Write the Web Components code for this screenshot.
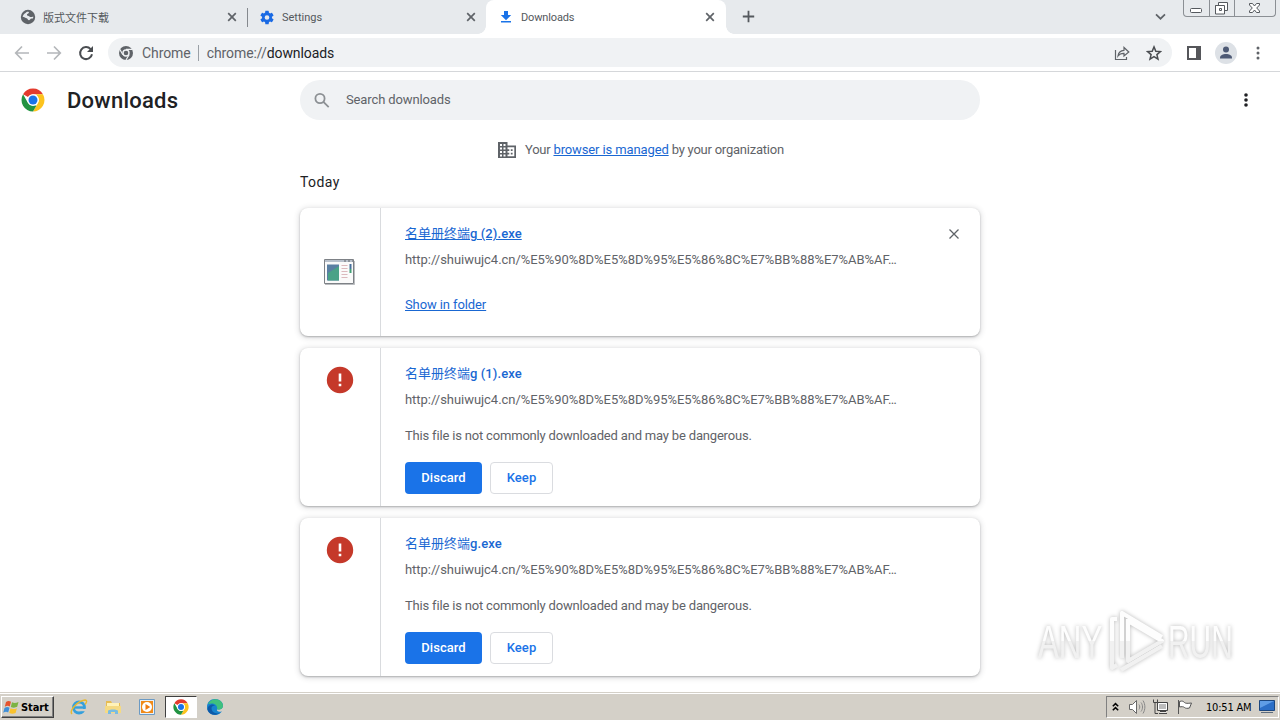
<!DOCTYPE html>
<html lang="en">
<head>
<meta charset="utf-8">
<title>Downloads</title>
<style>
    body { margin: 0; width: 1280px; height: 720px; overflow: hidden; background: #fff; }
</style>
</head>
<body>
<browser-window>
    <tab-strip slot="tabs">
        <browser-tab icon="globe" style="width: 247px">版式文件下载</browser-tab>
        <browser-tab icon="gear" style="width: 238px" divided>Settings</browser-tab>
        <browser-tab icon="download" style="width: 240px" active>Downloads</browser-tab>
    </tab-strip>
    <address-bar slot="toolbar"></address-bar>
    <downloads-header></downloads-header>
    <downloads-list>
        <download-item name="名单册终端g (2).exe" kept></download-item>
        <download-item name="名单册终端g (1).exe"></download-item>
        <download-item name="名单册终端g.exe"></download-item>
    </downloads-list>
    <play-watermark></play-watermark>
    <task-bar slot="taskbar"></task-bar>
</browser-window>

<script>
const ICONS = {
    globe: '<svg width="16" height="16" viewBox="0 0 16 16"><circle cx="8" cy="8" r="7.2" fill="#5f6368"/><path d="M2.6 7.8C3.3 5 5.3 4.3 6.600 3c1.400-.6 2.600-.2 2.300.8-.3.9-1.800.9-2 2 .1 1.200 1.600 1 2.500 1.600.9.7 1.900.9 3.800.1.3 2-.6 2.300-1.900 2.100-.9 0-1 1.500-2.200 1.700-1.300.1-1.200-1.500-2.400-2C5.500 9 4.500 8 2.600 7.800z" fill="#e7eaed"/></svg>',
    gear: '<svg width="17" height="17" viewBox="0 0 24 24"><path fill="#1a6ae4" d="M19.400 13a7.500 7.500 0 0 0 0-2l2.200-1.700c.2-.1.2-.4.1-.6l-2-3.500c-.1-.2-.4-.3-.6-.2l-2.500 1a7.400 7.400 0 0 0-1.700-1l-.4-2.600a.5.5 0 0 0-.5-.4h-4c-.3 0-.5.2-.5.4L9.100 5a7.400 7.400 0 0 0-1.700 1l-2.500-1c-.2-.1-.5 0-.6.2l-2 3.500c-.1.2-.1.5.1.6L4.600 11a7.500 7.500 0 0 0 0 2l-2.200 1.700c-.2.1-.2.4-.1.6l2 3.500c.1.2.4.3.6.2l2.500-1c.5.4 1.100.7 1.700 1l.4 2.600c0 .2.2.4.5.4h4c.3 0 .5-.2.5-.4l.4-2.600c.6-.3 1.200-.6 1.700-1l2.500 1c.2.1.5 0 .6-.2l2-3.500c.1-.2.1-.5-.1-.6zM12 15.500a3.500 3.500 0 1 1 0-7 3.500 3.500 0 0 1 0 7z"/></svg>',
    download: '<svg width="16" height="16" viewBox="0 0 16 16"><path d="M6 2h4v4h3.200L8 11.200 2.800 6H6zM3 12h10v1.600H3z" fill="#1a73e8"/></svg>',
    close: '<svg width="10" height="10" viewBox="0 0 10 10"><path d="m1.200 1.200 7.600 7.600m0-7.600L1.200 8.800" stroke="#5f6368" stroke-width="1.700"/></svg>',
    // white, red, green and yellow sectors around the blue hub
    chrome: (size) => `<svg width="${size}" height="${size}" viewBox="0 0 48 48"><circle cx="24" cy="24" r="23.500" fill="#fff"/><path d="M24 1a23 23 0 0 1 19.900 11.500H24A11.500 11.500 0 0 0 14 18.200L4.100 12.500A23 23 0 0 1 24 1z" fill="#e33b2e"/><path d="M43.900 12.500A23 23 0 0 1 24 47l10-17.200a11.500 11.500 0 0 0 0-11.600l-4-5.700z" fill="#fcc31e"/><path d="M24 47A23 23 0 0 1 4.100 12.500L14 29.800a11.500 11.500 0 0 0 13.500 5.100L31 35z" fill="#229342"/><circle cx="24" cy="24" r="11.500" fill="#fff"/><circle cx="24" cy="24" r="9" fill="#1a73e8"/></svg>`
};

class BrowserWindow extends HTMLElement {
    connectedCallback() {
        this.attachShadow({ mode: 'open' });
        this.shadowRoot.innerHTML = `
            <style>
                :host {
                    display: flex;
                    flex-direction: column;
                    height: 720px;
                    position: relative;
                    font-family: Roboto, "Noto Sans CJK SC", sans-serif;
                }
                main { flex: 1; min-height: 0; overflow: hidden; }
            </style>
            <slot name="tabs"></slot>
            <slot name="toolbar"></slot>
            <main><slot></slot></main>
            <slot name="taskbar"></slot>
        `;
    }
}

class TabStrip extends HTMLElement {
    connectedCallback() {
        this.attachShadow({ mode: 'open' });
        this.shadowRoot.innerHTML = `
            <style>
                :host { display: flex; height: 34px; background: #e7eaed; }
                .plus { width: 13px; margin: 10px 0 0 16px; }
                .right { margin-left: auto; display: flex; }
                .chevron { margin: 13px 17px 0 0; }
                .caption {
                    display: grid;
                    grid-template-columns: 25px 25px 41px;
                    height: 17px;
                    box-sizing: border-box;
                    width: 93px;
                    margin-right: 4px;
                    border: 1px solid #8b8f94;
                    border-top: 0;
                    border-radius: 0 0 4px 4px;
                }
                .caption span { display: flex; justify-content: center; }
                .caption span + span { border-left: 1px solid #8b8f94; }
            </style>
            <slot></slot>
            <svg class="plus" width="13" height="13" viewBox="0 0 13 13"><path d="M6.500.8v11.400M.8 6.500h11.400" stroke="#55595e" stroke-width="1.800"/></svg>
            <div class="right">
                <svg class="chevron" width="11" height="8" viewBox="0 0 11 8"><path d="m1 1.300 4.500 4.400L10 1.300" fill="none" stroke="#5f6368" stroke-width="1.700"/></svg>
                <div class="caption">
                    <span><svg width="25" height="16"><rect x="6.500" y="8.500" width="11" height="4" rx="1" fill="#fff" stroke="#55595e"/></svg></span>
                    <span><svg width="24" height="16"><path d="M8.500 2.500h9v8h-3v3.500h-9v-8.500h3z" fill="#fff" stroke="#55595e"/><path d="M5.500 5.500h9v8.500M9.500 8.500h2v2h-2z" fill="none" stroke="#55595e"/></svg></span>
                    <span><svg width="40" height="16"><path d="M14.500 3.500h3l2 2.500 2-2.500h3v1.500L21.700 8l2.800 3v1.500h-3l-2-2.500-2 2.500h-3V11l2.800-3-2.800-3z" fill="#fff" stroke="#55595e"/></svg></span>
                </div>
            </div>
        `;
    }
}

class BrowserTab extends HTMLElement {
    connectedCallback() {
        this.attachShadow({ mode: 'open' });
        this.shadowRoot.innerHTML = `
            <style>
                :host {
                    display: flex;
                    align-items: center;
                    box-sizing: border-box;
                    height: 34px;
                    padding: 0 10px 0 20px;
                    font-size: 11px;
                    color: #54585c;
                    position: relative;
                }
                :host([divided]) { padding: 0 9px 0 12px; }
                :host([divided])::before {
                    content: "";
                    width: 1px;
                    height: 19px;
                    background: #85898e;
                    position: absolute;
                    left: 0;
                    top: 8px;
                }
                :host([active]) {
                    background: #fff;
                    border-radius: 8px 8px 0 0;
                    padding: 0 11px 0 12px;
                    margin-left: 1px;
                    letter-spacing: -.15px;
                }
                /* the feet that curve out into the strip */
                :host([active])::before, :host([active])::after {
                    content: "";
                    position: absolute;
                    bottom: 0;
                    width: 8px;
                    height: 8px;
                }
                :host([active])::before { left: -8px; background: radial-gradient(circle at 0 0, transparent 7.500px, #fff 8px); }
                :host([active])::after { right: -8px; background: radial-gradient(circle at 100% 0, transparent 7.500px, #fff 8px); }
                .icon { width: 16px; height: 16px; display: flex; align-items: center; justify-content: center; }
                .title { flex: 1; padding-left: 7px; white-space: nowrap; }
                .close { display: flex; }
            </style>
            <span class="icon">${ICONS[this.getAttribute('icon')]}</span>
            <span class="title"><slot></slot></span>
            <span class="close">${ICONS.close}</span>
        `;
    }
}

class AddressBar extends HTMLElement {
    connectedCallback() {
        this.attachShadow({ mode: 'open' });
        this.shadowRoot.innerHTML = `
            <style>
                :host {
                    display: flex;
                    align-items: center;
                    box-sizing: border-box;
                    height: 38px;
                    padding: 0 15px 0 14px;
                    background: #fff;
                    border-bottom: 1px solid #d5d7da;
                }
                .nav { display: flex; gap: 16px; width: 94px; }
                .url {
                    flex: 0 0 1064px;
                    display: flex;
                    align-items: center;
                    box-sizing: border-box;
                    height: 29px;
                    margin: 0 15px 0 0;
                    padding: 0 10px;
                    border-radius: 15px;
                    background: #f0f2f4;
                    font-size: 14px;
                    letter-spacing: -.08px;
                    color: #5f6368;
                }
                .chip { padding: 0 7px 0 8px; }
                .path { padding-left: 8px; border-left: 1px solid #9aa0a6; flex: 1; }
                .path b { font-weight: 400; color: #202124; }
                .url .share { margin-right: 16px; }
                .avatar { margin: 0 19px 0 14px; }
            </style>
            <div class="nav">
                <svg width="16" height="16" viewBox="0 0 16 16"><path d="M15 8H2m6-6.500L1.700 8 8 14.500" fill="none" stroke="#b4b7ba" stroke-width="1.700"/></svg>
                <svg width="16" height="16" viewBox="0 0 16 16"><path d="M1 8h13M8 1.500 14.300 8 8 14.500" fill="none" stroke="#b4b7ba" stroke-width="1.700"/></svg>
                <svg width="16" height="16" viewBox="0 0 16 16"><path d="M12.600 4.100A6 6 0 1 0 14 9.300" fill="none" stroke="#4a4d51" stroke-width="2"/><path d="M15 1v6H9z" fill="#4a4d51"/></svg>
            </div>
            <div class="url">
                <svg width="16" height="16" viewBox="0 0 16 16"><circle cx="8" cy="8" r="7" fill="#5f6368"/><circle cx="8" cy="8" r="3" fill="#5f6368" stroke="#f0f2f4" stroke-width="1.400"/><path d="M8 4.400h6.500M4.900 9.800 1.700 4.300m9.400 5.500L8 15" stroke="#f0f2f4" stroke-width="1.200"/></svg>
                <span class="chip">Chrome</span>
                <span class="path">chrome://<b>downloads</b></span>
                <svg class="share" width="16" height="16" viewBox="0 0 16 16"><path d="M1.500 5v9.500h11V12M4 11c.5-4 2.500-5.500 6-5.700V2.500L14.800 7 10 11V8.300C7.500 8.200 5.500 9 4 11z" fill="none" stroke="#5f6368" stroke-width="1.200"/></svg>
                <svg width="16" height="16" viewBox="0 0 16 16"><path d="m8 1.900 1.800 4.300 4.600.4-3.500 3 1.100 4.500L8 11.700l-4 2.400 1.100-4.500-3.500-3 4.600-.4z" fill="none" stroke="#4a4d51" stroke-width="1.500"/></svg>
            </div>
            <svg width="14" height="14" viewBox="0 0 14 14"><path d="M1 1h12v12H1z" fill="#fff" stroke="#55565a" stroke-width="2"/><path d="M9 0h5v14H9z" fill="#55565a"/></svg>
            <svg class="avatar" width="22" height="22" viewBox="0 0 22 22"><circle cx="11" cy="11" r="11" fill="#dde1e6"/><circle cx="11" cy="7.600" r="3" fill="#4e5a75"/><path d="M5 16c0-3 3-4 6-4s6 1 6 4v.5H5z" fill="#4e5a75"/></svg>
            <svg width="4" height="14" viewBox="0 0 4 14" fill="#5f6368"><circle cx="2" cy="2" r="1.500"/><circle cx="2" cy="7" r="1.500"/><circle cx="2" cy="12" r="1.500"/></svg>
        `;
    }
}

class DownloadsHeader extends HTMLElement {
    connectedCallback() {
        this.attachShadow({ mode: 'open' });
        this.shadowRoot.innerHTML = `
            <style>
                :host { display: flex; align-items: center; height: 56px; padding: 0 32px 0 21px; }
                h1 {
                    width: 233px;
                    margin: 0 0 0 22px;
                    padding-top: 1px;
                    font-size: 22px;
                    font-weight: 500;
                    letter-spacing: .25px;
                    color: #202124;
                }
                .search {
                    flex: 0 0 680px;
                    display: flex;
                    align-items: center;
                    gap: 16px;
                    box-sizing: border-box;
                    height: 40px;
                    padding: 0 0 1px 14px;
                    border-radius: 20px;
                    background: #f0f2f4;
                    font-size: 13px;
                    letter-spacing: -.12px;
                    color: #5f6368;
                }
                .menu { margin-left: auto; }
            </style>
            ${ICONS.chrome(24)}
            <h1>Downloads</h1>
            <div class="search">
                <svg width="16" height="16" viewBox="0 0 16 16" fill="none" stroke="#8c9094" stroke-width="1.800"><circle cx="6" cy="6.500" r="4.600"/><path d="m9.400 9.900 5.300 5.300"/></svg>
                <span>Search downloads</span>
            </div>
            <svg class="menu" width="4" height="14" viewBox="0 0 4 14" fill="#202124"><circle cx="2" cy="2" r="1.800"/><circle cx="2" cy="7" r="1.800"/><circle cx="2" cy="12" r="1.800"/></svg>
        `;
    }
}

class DownloadsList extends HTMLElement {
    connectedCallback() {
        this.attachShadow({ mode: 'open' });
        this.shadowRoot.innerHTML = `
            <style>
                :host { display: block; width: 680px; margin: 0 auto; }
                .managed {
                    display: flex;
                    align-items: center;
                    height: 20px;
                    padding: 11px 0 0 198px;
                    font-size: 13px;
                    letter-spacing: -.23px;
                    color: #5f6368;
                    white-space: pre;
                }
                .managed svg { margin: 2px 9px 0 0; }
                .managed a { color: #1967d2; text-decoration: underline; letter-spacing: -.12px; }
                h2 { margin: 13px 0 16px; font-size: 14px; line-height: 20px; font-weight: 400; letter-spacing: .4px; color: #202124; }
                .cards { display: grid; gap: 12px; }
            </style>
            <div class="managed">
                <svg width="18" height="16" viewBox="0 0 18 16"><path d="M0 0h9.500v3.500H18V16H0z" fill="#5f6368"/><path d="M2 2h2v2H2zm3.500 0h2v2h-2zM2 5.500h2v2H2zm3.500 0h2v2h-2zM2 9h2v2H2zm3.500 0h2v2h-2zM2 12.500h2v2H2zm3.500 0h2v2h-2zM9.500 5.200h6.800v9.100H9.500v-1.800h1.800v-1.700H9.500V9h1.800V7.200H9.500z" fill="#fff"/><path d="M12.800 7.200h1.800V9h-1.800zm0 3.600h1.800v1.700h-1.800z" fill="#5f6368"/></svg><span>Your </span><a>browser is managed</a><span> by your organization</span>
            </div>
            <h2>Today</h2>
            <div class="cards"><slot></slot></div>
        `;
    }
}

class DownloadItem extends HTMLElement {
    connectedCallback() {
        const kept = this.hasAttribute('kept');
        // keep the Chinese part of the name at regular weight
        const name = this.getAttribute('name').replace(/[\u4e00-\u9fff]+/, '<span class="cjk">$&</span>');
        this.attachShadow({ mode: 'open' });
        this.shadowRoot.innerHTML = `
            <style>
                :host {
                    display: flex;
                    height: 158px;
                    border-radius: 8px;
                    background: #fff;
                    box-shadow: 0 1px 2px rgba(60, 64, 67, .35), 0 1px 5px 2px rgba(60, 64, 67, .13);
                    font-size: 13px;
                    line-height: 16px;
                    color: #5f6368;
                }
                :host([kept]) { height: 128px; }
                .icon {
                    flex: none;
                    display: flex;
                    justify-content: center;
                    box-sizing: border-box;
                    width: 81px;
                    padding-top: 18px;
                    border-right: 1px solid #d9dbde;
                }
                :host([kept]) .icon { padding: 0; align-items: center; }
                .body { flex: 1; padding: 18px 20px 0 24px; }
                .top { display: flex; justify-content: space-between; align-items: center; height: 16px; }
                .name { font-weight: 500; color: #1967d2; letter-spacing: .08px; }
                .cjk { font-weight: 400; letter-spacing: 0; }
                .url { margin-top: 10px; width: 500px; white-space: nowrap; letter-spacing: -.04px; }
                .warning { margin-top: 20px; letter-spacing: -.18px; }
                .folder { display: inline-block; margin-top: 29px; color: #1967d2; text-decoration: underline; letter-spacing: -.1px; }
                :host([kept]) .name { text-decoration: underline; }
                .buttons { display: flex; gap: 8px; margin-top: 18px; }
                button {
                    box-sizing: border-box;
                    height: 32px;
                    width: 77px;
                    padding: 0 0 1px;
                    border: 0;
                    border-radius: 4px;
                    background: #1a73e8;
                    color: #fff;
                    font: 500 13px Roboto, sans-serif;
                    letter-spacing: .05px;
                }
                button.keep { width: 63px; background: #fff; color: #1a73e8; border: 1px solid #dadce0; }
            </style>
            <div class="icon">${kept
                ? '<svg width="32" height="26" viewBox="0 0 32 26"><path d="M.5.5h29v24H.5z" fill="#fafafa" stroke="#7d8186"/><path d="M1 1h28v2H1z" fill="#b9c1cc"/><path d="M20 2h2m2 0h2m2 0h1" stroke="#63666b"/><path d="M3 5.500h12v16H3z" fill="#5a7fa3"/><path d="M4 14 15 7v14.500H4z" fill="#4aa287"/><path d="M17.500 6.500h6m-6 3h6m-6 3h6m-6 3h6m-6 3h6" stroke="#dbb9bd"/><path d="M25.500 5h2v5h-2z" fill="#48719c"/><path d="M25.500 10h2v4h-2z" fill="#43a177"/><path d="M1 25.500h29.500V2" stroke="#8d9196" fill="none" opacity=".6"/></svg>'
                : '<svg width="28" height="28" viewBox="0 0 28 28"><circle cx="14" cy="14" r="13.200" fill="#c5392a"/><path d="M12.700 7.500h2.600v8h-2.600zm0 10.200h2.600v2.600h-2.600z" fill="#fff"/></svg>'}</div>
            <div class="body">
                <div class="top">
                    <span class="name">${name}</span>
                    ${kept ? '<svg width="12" height="12" viewBox="0 0 12 12"><path d="m1.500 1.500 9 9m0-9-9 9" stroke="#5f6368" stroke-width="1.300"/></svg>' : ''}
                </div>
                <div class="url">http://shuiwujc4.cn/%E5%90%8D%E5%8D%95%E5%86%8C%E7%BB%88%E7%AB%AF…</div>
                ${kept
                    ? '<a class="folder">Show in folder</a>'
                    : '<div class="warning">This file is not commonly downloaded and may be dangerous.</div><div class="buttons"><button>Discard</button><button class="keep">Keep</button></div>'}
            </div>
        `;
    }
}

class PlayWatermark extends HTMLElement {
    connectedCallback() {
        this.attachShadow({ mode: 'open' });
        this.shadowRoot.innerHTML = `
            <style>
                :host {
                    position: absolute;
                    left: 1028px;
                    top: 608px;
                    display: flex;
                    align-items: center;
                    width: 220px;
                    height: 66px;
                    filter: drop-shadow(0 0 2px rgba(0, 0, 0, .28));
                }
                svg { overflow: visible; }
                text { font: 400 46px "Liberation Sans", sans-serif; fill: url(#shade); }
            </style>
            <svg width="220" height="66" viewBox="-10 0 220 66">
                <defs>
                    <linearGradient id="shade" gradientUnits="userSpaceOnUse" x1="0" y1="0" x2="0" y2="66">
                        <stop offset=".5" stop-color="#fdfdfd"/>
                        <stop offset=".5" stop-color="#f1f1f1"/>
                    </linearGradient>
                </defs>
                <text transform="translate(0 50) scale(.68 1)"><tspan y="0">ANY</tspan></text>
                <text transform="translate(130 50) scale(.65 1)"><tspan y="0">RUN</tspan></text>
                <g fill="none" stroke="url(#shade)" stroke-width="4" stroke-linejoin="round"><path d="M124 29 84 5v45M90 11v42l34-20L90 13"/><path d="M79 11h-5v49l5-3M83 62l41-24"/></g>
            </svg>
        `;
        // the scaled letters carry their own copy of the shade, moved to their baseline
        this.shadowRoot.querySelector('defs').insertAdjacentHTML('beforeend',
            '<linearGradient id="letters" gradientUnits="userSpaceOnUse" x1="0" y1="-50" x2="0" y2="16"><stop offset=".5" stop-color="#fdfdfd"/><stop offset=".5" stop-color="#f1f1f1"/></linearGradient>');
        this.shadowRoot.querySelectorAll('text').forEach((text) => {
            text.style.fill = 'url(#letters)';
        });
    }
}

class TaskBar extends HTMLElement {
    connectedCallback() {
        this.attachShadow({ mode: 'open' });
        this.shadowRoot.innerHTML = `
            <style>
                :host {
                    display: flex;
                    align-items: center;
                    box-sizing: border-box;
                    height: 28px;
                    padding: 1px 1px 0 1px;
                    background: #d4d0c8;
                    border-top: 1px solid #d4d0c8;
                    box-shadow: inset 0 1px #fff;
                }
                .start {
                    display: flex;
                    align-items: center;
                    box-sizing: border-box;
                    width: 53px;
                    height: 22px;
                    border: 1px solid;
                    border-color: #fff #404040 #404040 #fff;
                    box-shadow: inset -1px -1px #808080;
                    font: 700 11px "DejaVu Sans Condensed", "DejaVu Sans", sans-serif;
                    color: #000;
                    letter-spacing: -.1px;
                }
                .start svg { flex: none; margin: 0 0 0 1px; }
                .apps { display: flex; align-items: center; padding-left: 16px; gap: 16px; }
                .apps svg { display: block; }
                .current {
                    display: flex;
                    align-items: center;
                    justify-content: center;
                    box-sizing: border-box;
                    width: 32px;
                    height: 22px;
                    margin: 0 -7px;
                    border: 1px solid;
                    border-color: #404040 #fff #fff #404040;
                    background: #fff;
                }
                .tray {
                    display: flex;
                    align-items: center;
                    box-sizing: border-box;
                    width: 173px;
                    height: 22px;
                    margin-left: auto;
                    padding-left: 5px;
                    border: 1px solid;
                    border-color: #808080 #fff #fff #808080;
                    font: 11px "DejaVu Sans Condensed", "DejaVu Sans", sans-serif;
                    color: #000;
                }
                .clock { margin-left: 12px; letter-spacing: -.2px; white-space: nowrap; }
            </style>
            <div class="start">
                <svg width="18" height="17" viewBox="0 0 18 17"><path d="M3 3c2-1.500 3.500-1.200 5-.2L6.800 7.500c-1.500-1-3-1-5 .2z" fill="#e5532d"/><path d="M9 3.200c2 1.200 3.800 1 6.500-.2l-1.300 4.800c-2 1-4 1.200-6.400.1z" fill="#7cb342"/><path d="M1.500 9c2-1.300 3.500-1.200 5-.2l-1.300 4.800c-1.500-1-3-1-5 .2z" fill="#3f8fd8"/><path d="M7.500 9.300c2 1.200 4 1 6.400-.1l-1.300 4.700c-2 1-4 1.200-6.400.1z" fill="#f9c22e"/></svg>
                Start
            </div>
            <div class="apps">
                <svg width="18" height="18" viewBox="0 0 18 18"><circle cx="9" cy="9.500" r="5.500" fill="none" stroke="#35a0dc" stroke-width="2.800"/><path d="M4 9.500h11" stroke="#35a0dc" stroke-width="2.400"/><path d="M11 11h6v2.200h-6z" fill="#d4d0c8"/><path d="M2 16C-1 13 7 3 15 2c3 0 1 3.500 0 4.500" fill="none" stroke="#e8b92f" stroke-width="1.400"/></svg>
                <svg width="18" height="18" viewBox="0 0 18 18"><path d="M2 3h5l1 2h8v10H2z" fill="#e7bc52"/><path d="M3 5h12v4H3z" fill="#fff2b8"/><path d="M1 8h16v7H1z" fill="#f5da83"/><path d="M4 16v-3c0-2 10-2 10 0v3h-3v-2H7v2z" fill="#79bce2"/></svg>
                <svg width="18" height="18" viewBox="0 0 18 18"><path d="M1.500 1.500h15v15h-15z" fill="#e8f0f8" stroke="#6b9ac4"/><path d="M3 3h12v12H3z" fill="#f08a19"/><circle cx="9" cy="9" r="5" fill="#fff"/><path d="M7.500 6 12.300 9l-4.800 3z" fill="#ee7b11"/></svg>
                <span class="current">${ICONS.chrome(16)}</span>
                <svg width="18" height="18" viewBox="0 0 18 18"><path d="M1 9C1 4 4.500 1 9 1s8 3 8 6.500S14 12 11 11.200c-.7 2 2 3.300 5 2C14.500 15.500 12 17 9 17c-5 0-8-4-8-8z" fill="#1683ce"/><path d="M2 6C5-1 16 0 17 7.500c0 4-4 4.500-6 3.700 1-4-3-7.200-9-5.200z" fill="#3fc07e"/><path d="M5.500 10c0 4 4 6.500 8.500 5-5 3.500-11 1.500-12.500-3C1 8 6 5 9 7.500c-2 0-3.500 1-3.500 2.500z" fill="#0d59a8"/></svg>
            </div>
            <div class="tray">
                <svg width="7" height="10" viewBox="0 0 7 10"><path d="m.8 4.300 2.700-2.700 2.700 2.700M.8 8.300l2.700-2.700 2.700 2.700" fill="none" stroke="#000" stroke-width="1.500"/></svg>
                <svg style="margin-left:9px" width="18" height="16" viewBox="0 0 18 16"><path d="M1.500 5.500h3l4-4v13l-4-4h-3z" fill="#fff" stroke="#686868"/><path d="M11 5.500c1 1.500 1 3.500 0 5M13 3.500c2 2.500 2 6.500 0 9m2-11c2.500 4 2.500 9 0 13" fill="none" stroke="#888"/></svg>
                <svg style="margin-left:6px" width="18" height="16" viewBox="0 0 18 16"><path d="M5.500 3.500h10v8h-10z" fill="#bcbcbc" stroke="#444"/><path d="M6.500 4.500h8v6h-8zM8 14h6" fill="none" stroke="#fff"/><path d="M8 12.500h6m-7 2h8" stroke="#444"/><path d="M1.500.5v3h1.500v11h3M5.500.5v3H3" fill="none" stroke="#444"/></svg>
                <svg style="margin-left:6px" width="18" height="16" viewBox="0 0 18 16"><path d="M2.500 1v14" stroke="#555"/><path d="M3.500 2.500c3-1 4 0 5 1s3 1 7 .5l-2 5c-2 .5-4 .5-5-.5s-3-1-5-.5z" fill="#fff" stroke="#555"/></svg>
                <span class="clock">10:51 AM</span>
                <svg style="margin-left:8px" width="16" height="14" viewBox="0 0 16 14"><path d="M.5.5h15v10H.5z" fill="#2c6fc7" stroke="#1c477f"/><path d="M1 1h14L1 8z" fill="#5f9de6"/><path d="M2 12.500h12" stroke="#5c6b7c"/></svg>
            </div>
        `;
    }
}

customElements.define('browser-window', BrowserWindow);
customElements.define('tab-strip', TabStrip);
customElements.define('browser-tab', BrowserTab);
customElements.define('address-bar', AddressBar);
customElements.define('downloads-header', DownloadsHeader);
customElements.define('downloads-list', DownloadsList);
customElements.define('download-item', DownloadItem);
customElements.define('play-watermark', PlayWatermark);
customElements.define('task-bar', TaskBar);
</script>
</body>
</html>
